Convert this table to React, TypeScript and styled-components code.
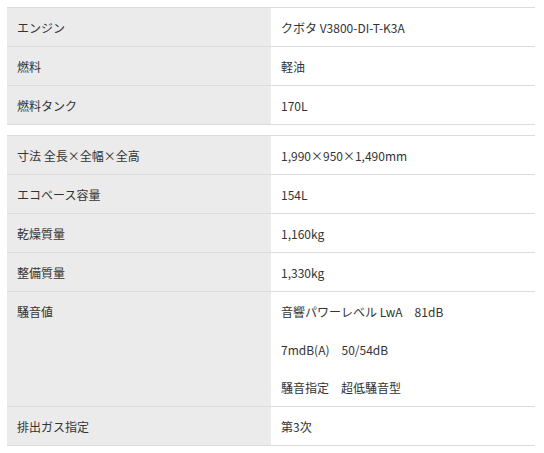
import styled, { createGlobalStyle } from 'styled-components';

const GlobalStyle = createGlobalStyle`
  body {
    margin: 0;
    background: #fff;
    font-family: 'Noto Sans CJK JP', 'Noto Sans', sans-serif;
    color: #333;
  }
`;

const Page = styled.div`
  padding: 7px 9px 0 7px;
  display: flex;
  flex-direction: column;
  gap: 10px;
`;

const Table = styled.table`
  width: 528px;
  border-collapse: collapse;
  table-layout: fixed;
  border-top: 1px solid #dcdcdc;
  font-size: 12px;
  line-height: 19px;
`;

const Label = styled.th`
  box-sizing: border-box;
  width: 264px;
  text-align: left;
  font-weight: 400;
  vertical-align: top;
  background: #ebebeb;
  padding: 10px 10px 9px;
  border-bottom: 1px solid #dcdcdc;
`;

const Value = styled.td`
  box-sizing: border-box;
  padding: 10px 10px 9px;
  vertical-align: top;
  border-bottom: 1px solid #dcdcdc;
`;

const Line = styled.p`
  margin: 0;
  & + & {
    margin-top: 19px;
  }
`;

interface Spec {
  label: string;
  values: string[];
}

const basic: Spec[] = [
  { label: 'エンジン', values: ['クボタ V3800-DI-T-K3A'] },
  { label: '燃料', values: ['軽油'] },
  { label: '燃料タンク', values: ['170L'] },
];

const detail: Spec[] = [
  { label: '寸法 全長×全幅×全高', values: ['1,990×950×1,490mm'] },
  { label: 'エコベース容量', values: ['154L'] },
  { label: '乾燥質量', values: ['1,160kg'] },
  { label: '整備質量', values: ['1,330kg'] },
  {
    label: '騒音値',
    values: ['音響パワーレベル LwA　81dB', '7mdB(A)　50/54dB', '騒音指定　超低騒音型'],
  },
  { label: '排出ガス指定', values: ['第3次'] },
];

const SpecTable = ({ rows }: { rows: Spec[] }) => (
  <Table>
    <tbody>
      {rows.map((r) => (
        <tr key={r.label}>
          <Label>{r.label}</Label>
          <Value>
            {r.values.map((v) => (
              <Line key={v}>{v}</Line>
            ))}
          </Value>
        </tr>
      ))}
    </tbody>
  </Table>
);

const App = () => {
  return (
    <>
      <GlobalStyle />
      <Page>
        <SpecTable rows={basic} />
        <SpecTable rows={detail} />
      </Page>
    </>
  );
};

export default App;
